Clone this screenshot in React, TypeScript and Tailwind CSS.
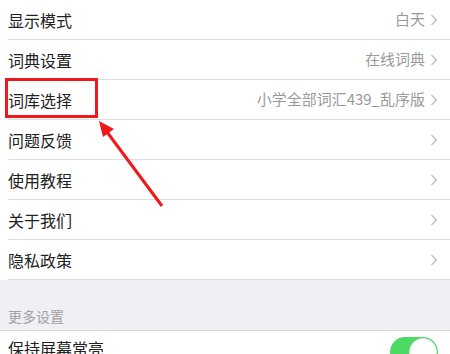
import React from "react";

const rows = [
  { label: "显示模式", value: "白天" },
  { label: "词典设置", value: "在线词典" },
  { label: "词库选择", value: "小学全部词汇439_乱序版" },
  { label: "问题反馈", value: "" },
  { label: "使用教程", value: "" },
  { label: "关于我们", value: "" },
  { label: "隐私政策", value: "" },
];

function Chevron() {
  return (
    <svg width="8" height="12" viewBox="0 0 8 12" className="ml-[5px] shrink-0">
      <polyline points="1.5,1 6.5,6 1.5,11" fill="none" stroke="#b8b8bd" strokeWidth="1.2" />
    </svg>
  );
}

export default function App() {
  return (
    <div
      className="relative w-[450px] h-[354px] overflow-hidden bg-white"
      style={{ fontFamily: '"Noto Sans CJK SC", "Noto Sans", sans-serif' }}
    >
      <div className="bg-white">
        {rows.map((r) => (
          <div key={r.label} className="pl-[8px]">
            <div className="flex items-center h-[40px] pr-[12px] border-b border-[#dedede]">
              <span className="text-[16px] text-[#222]">{r.label}</span>
              <span className="ml-auto text-[15px] text-[#9a9a9a]">{r.value}</span>
              <Chevron />
            </div>
          </div>
        ))}
      </div>

      {/* section header */}
      <div className="bg-[#f0eff4] h-[51px] flex items-end pl-[8px] pb-[3px] border-b border-[#d8d8dc]">
        <span className="text-[14px] text-[#a0a0a5]">更多设置</span>
      </div>

      <div className="bg-white flex items-start h-[40px] pl-[8px] pr-[12px] pt-[5px]">
        <span className="text-[16px] text-[#222]">保持屏幕常亮</span>
        <div className="ml-auto mt-[1px] w-[48px] h-[30px] rounded-full bg-[#4cd964] relative">
          <div className="absolute right-[1px] top-[1px] w-[28px] h-[28px] rounded-full bg-white border border-[#e5e5e5]" />
        </div>
      </div>

      {/* annotation: red box + arrow */}
      <div className="absolute left-[5px] top-[78px] w-[93px] h-[40px] border-[3px] border-[#f01818]" />
      <svg className="absolute left-0 top-0" width="450" height="354" viewBox="0 0 450 354">
        <line x1="162" y1="206" x2="107" y2="132" stroke="#f01818" strokeWidth="3" />
        <polygon points="99,121 114,129 103,137" fill="#f01818" />
      </svg>
    </div>
  );
}
